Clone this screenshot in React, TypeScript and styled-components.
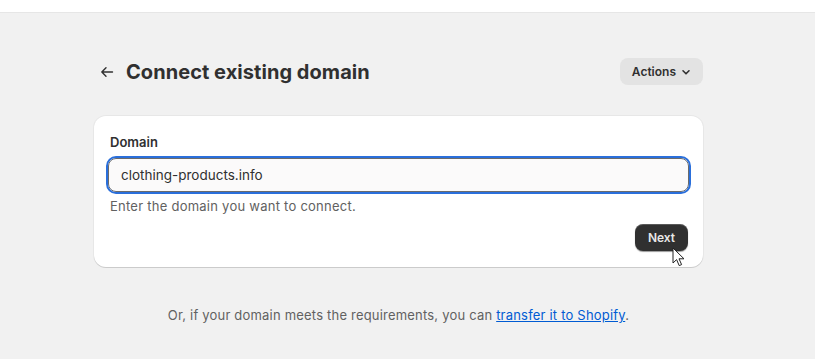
import React from 'react';
import styled, { createGlobalStyle } from 'styled-components';

const GlobalStyle = createGlobalStyle`
  html, body {
    margin: 0;
    padding: 0;
    background: #f1f1f1;
    font-family: Inter, "Liberation Sans", sans-serif;
    color: #303030;
  }
`;

const TopBar = styled.div`
  height: 12px;
  background: #ffffff;
  border-bottom: 1px solid #e6e6e6;
`;

const Page = styled.div`
  padding: 45px 0 0 94px;
  width: 609px;
`;

const Header = styled.div`
  display: flex;
  align-items: center;
  justify-content: space-between;
  height: 27px;
`;

const TitleGroup = styled.div`
  display: flex;
  align-items: center;
  gap: 12px;
  padding-left: 6px;
`;

const BackButton = styled.button`
  border: none;
  background: none;
  padding: 0;
  display: flex;
  color: #303030;
  cursor: pointer;
`;

const Title = styled.h1`
  margin: 0;
  font-size: 20px;
  font-weight: 700;
  letter-spacing: 0.05px;
  color: #303030;
`;

const ActionsButton = styled.button`
  display: flex;
  align-items: center;
  gap: 4px;
  height: 27px;
  padding: 0 11px 0 12px;
  border: none;
  border-radius: 8px;
  background: #e3e3e3;
  font-family: inherit;
  font-size: 12px;
  font-weight: 600;
  color: #303030;
`;

const Card = styled.div`
  margin-top: 31px;
  background: #ffffff;
  border-radius: 12px;
  box-shadow: 0 1px 0 rgba(0, 0, 0, 0.12), 0 0 0 1px rgba(0, 0, 0, 0.04);
  padding: 17px 15px 16px 16px;
  display: flex;
  flex-direction: column;
`;

const Label = styled.label`
  font-size: 13px;
  font-weight: 600;
  color: #303030;
  line-height: 18px;
`;

const Input = styled.input`
  margin-top: 7px;
  box-sizing: border-box;
  height: 34px;
  margin-left: -2px;
  width: calc(100% + 3px);
  padding: 0 12px;
  border: 1px solid #6b6b6b;
  border-radius: 8px;
  outline: 2px solid #2a6fdb;
  outline-offset: 0;
  background: #fbfafa;
  font-family: inherit;
  font-size: 13.5px;
  color: #303030;
`;

const Help = styled.div`
  margin-top: 5px;
  font-size: 13px;
  line-height: 18px;
  color: #616161;
  letter-spacing: 0.25px;
`;

const Footer = styled.div`
  display: flex;
  justify-content: flex-end;
  margin-top: 9px;
  position: relative;
`;

const NextButton = styled.button`
  height: 27px;
  width: 53px;
  border: none;
  border-radius: 8px;
  background: #303030;
  box-shadow: inset 0 1px 0 rgba(255, 255, 255, 0.2), 0 1px 1px rgba(0, 0, 0, 0.4);
  color: #e8e8e8;
  font-family: inherit;
  font-size: 12px;
  font-weight: 600;
`;

const Pointer = styled.svg`
  position: absolute;
  right: 2px;
  top: 23px;
`;

const Note = styled.p`
  margin: 40px 0 0;
  text-align: center;
  font-size: 13px;
  color: #616161;
  letter-spacing: 0.2px;
`;

const Link = styled.a`
  color: #005bd3;
  text-decoration: underline;
`;

export default function App() {
  return (
    <>
      <GlobalStyle />
      <TopBar />
      <Page>
        <Header>
          <TitleGroup>
            <BackButton aria-label="Back">
              <svg width="14" height="14" viewBox="0 0 14 14" fill="none" stroke="#303030" strokeWidth="1.4" strokeLinecap="round" strokeLinejoin="round">
                <path d="M12.5 7H1.8M6 2.8L1.8 7L6 11.2" />
              </svg>
            </BackButton>
            <Title>Connect existing domain</Title>
          </TitleGroup>
          <ActionsButton>
            Actions
            <svg width="12" height="12" viewBox="0 0 12 12" fill="none" stroke="#303030" strokeWidth="1.6" strokeLinecap="round" strokeLinejoin="round">
              <path d="M3 4.8L6 7.8L9 4.8" />
            </svg>
          </ActionsButton>
        </Header>
        <Card>
          <Label>Domain</Label>
          <Input defaultValue="clothing-products.info" />
          <Help>Enter the domain you want to connect.</Help>
          <Footer>
            <NextButton>Next</NextButton>
            <Pointer width="14" height="21" viewBox="0 0 14 21">
              <path d="M1 1L1 16L4.6 12.6L7.2 18.6L9.6 17.6L7 11.8L12 11.8Z" fill="#ffffff" stroke="#222" strokeWidth="1" strokeLinejoin="round" />
            </Pointer>
          </Footer>
        </Card>
        <Note>
          Or, if your domain meets the requirements, you can <Link href="#">transfer it to Shopify</Link>.
        </Note>
      </Page>
    </>
  );
}
